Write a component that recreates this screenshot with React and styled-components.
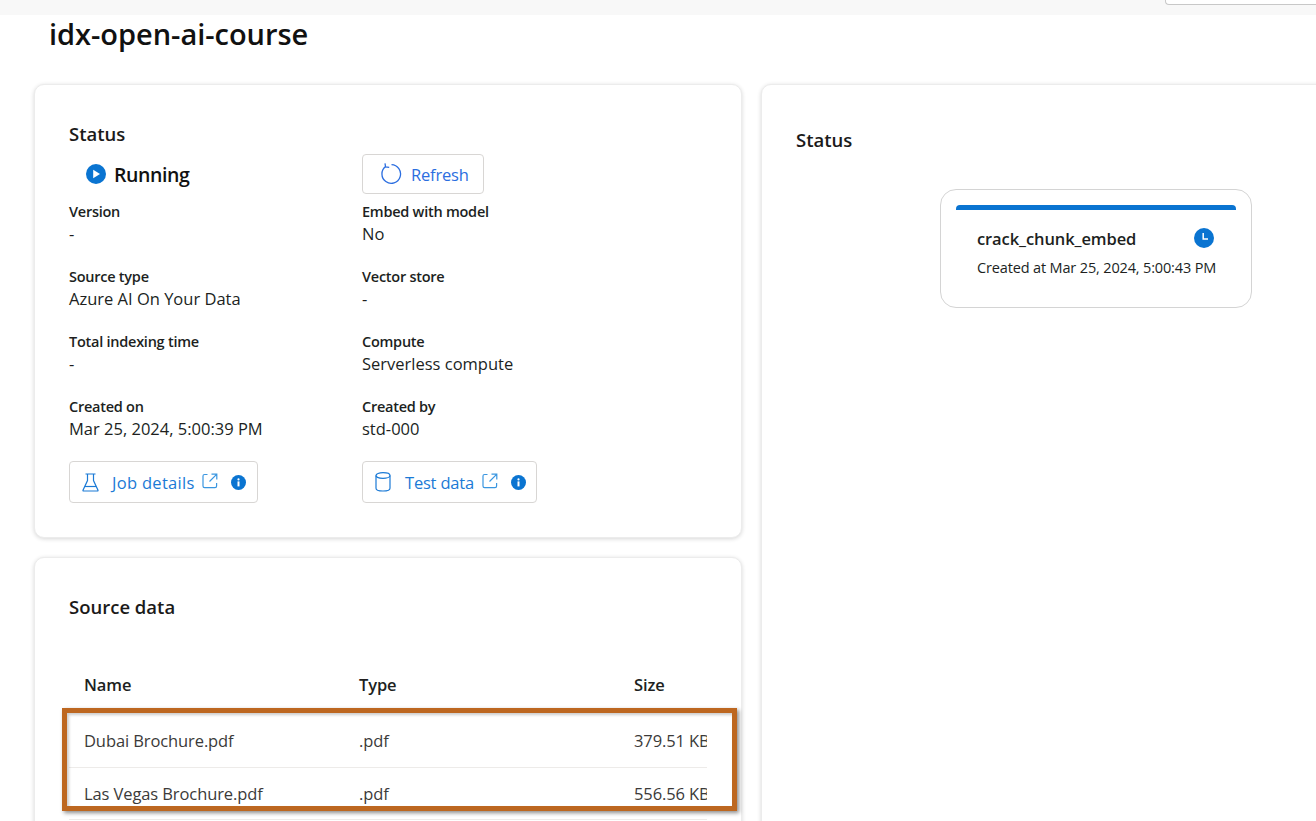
import React from "react";
import styled, { createGlobalStyle } from "styled-components";

const Global = createGlobalStyle`
  html, body { margin: 0; padding: 0; background: #fff; }
  body { font-family: "Open Sans", "Noto Sans", sans-serif; color: #201f1e; }
`;
const Page = styled.div`
  position: relative; width: 1316px; height: 821px; overflow: hidden; background: #fff;
`;
const TopBar = styled.div`
  height: 15px; background: #f8f8f8; display: flex; justify-content: flex-end; align-items: flex-start;
`;
const SearchEdge = styled.div`
  width: 151px; height: 5px; box-sizing: border-box; background: #fff;
  border: 1px solid #c8c8c8; border-top: 0; border-right: 0; border-radius: 0 0 0 4px;
`;
const Title = styled.h1`
  margin: 0; padding: 0 0 0 49px; height: 69px; box-sizing: border-box;
  font-size: 29px; line-height: 38px; font-weight: 600; color: #111; letter-spacing: -0.03px; white-space: nowrap;
`;
const Columns = styled.div`
  display: grid; grid-template-columns: 708px 620px; column-gap: 19px; padding-left: 34px; align-items: start;
`;
const Stack = styled.div`
  display: flex; flex-direction: column; gap: 19px;
`;
const Card = styled.section`
  box-sizing: border-box; background: #fff; border: 1px solid #ececec; border-radius: 10px;
  box-shadow: 0 1px 4px rgba(0,0,0,.16);
  padding: ${p => p.$pad || "37px 34px 34px"};
  min-height: ${p => p.$minH || "auto"};
`;
const Heading = styled.h2`
  margin: 0; font-size: 18.5px; line-height: 24px; font-weight: 600; color: #1b1a19; letter-spacing: 0;
`;
const StatusGrid = styled.div`
  display: grid; grid-template-columns: 293px 1fr; margin-top: 8px;
`;
const StatusLabel = styled.div`
  display: flex; align-items: center; gap: 8px; padding-left: 17px; height: 40px;
  font-size: 19.5px; font-weight: 600; color: #111; letter-spacing: -0.4px;
`;
const Button = styled.button`
  box-sizing: border-box; display: inline-flex; align-items: center; background: #fff;
  width: ${p => p.$w}px; height: ${p => p.$h}px; padding: 0 0 0 ${p => p.$pl}px; gap: ${p => p.$gap}px;
  border: 1px solid #d8d6d4; border-radius: 4px; font: inherit; font-size: 16.5px;
  color: ${p => p.$color || "#1b7ad6"}; letter-spacing: -0.2px; justify-self: start;
`;
const Fields = styled.div`
  display: grid; grid-template-columns: 293px 1fr; row-gap: 20px; margin-top: 8px;
`;
const Field = styled.div`
  display: flex; flex-direction: column; height: 45px;
`;
const FieldLabel = styled.div`
  font-size: 14.5px; line-height: 20px; font-weight: 600; color: #201f1e; letter-spacing: -0.25px;
`;
const FieldValue = styled.div`
  font-size: 16.5px; line-height: 24px; color: #201f1e; letter-spacing: 0;
`;
const Links = styled.div`
  display: grid; grid-template-columns: 293px 1fr; margin-top: 19px;
`;
const LinkText = styled.span`
  margin-right: -6px; letter-spacing: ${p => p.$ls}px;
`;
const InfoWrap = styled.span`
  display: inline-flex; margin-left: ${p => p.$ml}px;
`;
const Table = styled.div`
  margin-top: 41px; width: 638px; overflow: hidden;
`;
const Row = styled.div`
  display: grid; grid-template-columns: 275px 275px 275px; padding-left: 15px; align-items: center; white-space: nowrap;
  height: ${p => p.$head ? 48 : 52.5}px;
  margin-bottom: ${p => p.$head ? 7 : 0}px;
  border-bottom: ${p => p.$head ? "0" : "1px solid #edebe9"};
  box-sizing: border-box;
  font-size: 16.5px;
  font-weight: ${p => p.$head ? 600 : 400};
  color: ${p => p.$head ? "#201f1e" : "#3b3a39"};
  letter-spacing: -0.1px;
`;
const Cell = styled.div``;
const NodeBox = styled.div`
  box-sizing: border-box; width: 312px; height: 119px; margin: 37px 0 0 144px; padding: 15px;
  border: 1px solid #d4d4d4; border-radius: 16px; background: #fff;
`;
const NodeBar = styled.div`
  height: 5px; background: #0a74d1; border-radius: 4px 4px 0 0;
`;
const NodeHead = styled.div`
  display: flex; justify-content: space-between; align-items: center; padding: 16px 22px 0 21px; height: 24px;
`;
const NodeName = styled.div`
  font-size: 16.5px; font-weight: 600; color: #201f1e; letter-spacing: -0.1px; padding-top: 1px;
`;
const NodeMeta = styled.div`
  font-size: 14.5px; line-height: 20px; padding: 8px 0 0 21px; color: #201f1e; letter-spacing: -0.15px; white-space: nowrap;
`;
const Annotation = styled.div`
  position: absolute; left: 62px; top: 708px; width: 675px; height: 103px; box-sizing: border-box;
  border: 5px solid #bd6720; box-shadow: 2px 2px 4px rgba(0,0,0,.45), inset 2px 2px 3px rgba(0,0,0,.2);
  pointer-events: none;
`;
const ExternalSvg = styled.svg`
  margin-top: -3px;
`;

const PlayIcon = () => (
  <svg width="20" height="20" viewBox="0 0 20 20">
    <circle cx="10" cy="10" r="10" fill="#0a74d1" />
    <path d="M7.2 5.8 L14 10 L7.2 14.2 Z" fill="#fff" />
  </svg>
);
const RefreshIcon = () => (
  <svg width="22" height="22" viewBox="0 0 22 22" fill="none" stroke="#2b6ee0" strokeWidth="1.3">
    <path d="M5.6 3.6 A9.3 9.3 0 1 0 11.5 1.7" />
    <path d="M5 0.4 L5.6 4 L9.2 4.4" />
  </svg>
);
const FlaskIcon = () => (
  <svg width="17" height="19" viewBox="0 0 17 19" fill="none" stroke="#1b7ad6" strokeWidth="1.2">
    <path d="M3.5 1 H13.5 M5.5 1 V7.5 L1 17.2 Q0.8 18 1.6 18 H15.4 Q16.2 18 16 17.2 L11.5 7.5 V1" />
    <path d="M3 13.5 H14" />
  </svg>
);
const CylinderIcon = () => (
  <svg width="16" height="20" viewBox="0 0 16 20" fill="none" stroke="#1b7ad6" strokeWidth="1.2">
    <ellipse cx="8" cy="3.5" rx="7" ry="2.8" />
    <path d="M1 3.5 V16.2 C1 17.8 4 19 8 19 C12 19 15 17.8 15 16.2 V3.5" />
  </svg>
);
const ExternalIcon = () => (
  <ExternalSvg width="16" height="16" viewBox="0 0 16 16" fill="none" stroke="#3a96e0" strokeWidth="1.2">
    <path d="M5.5 1.5 H2.6 Q1 1.5 1 3.1 V13 Q1 14.6 2.6 14.6 H13 Q14.6 14.6 14.6 13 V10" />
    <path d="M7.5 8.5 L14.6 1.4 M9.5 1.2 H14.8 V6.5" />
  </ExternalSvg>
);
const InfoIcon = () => (
  <svg width="15" height="15" viewBox="0 0 15 15">
    <circle cx="7.5" cy="7.5" r="7.5" fill="#0a74d1" />
    <circle cx="7.5" cy="4.4" r="1.1" fill="#fff" />
    <path d="M6.5 6.4 H8.5 V11.4 H6.5 Z" fill="#fff" />
  </svg>
);
const ClockIcon = () => (
  <svg width="20" height="20" viewBox="0 0 20 20">
    <circle cx="10" cy="10" r="10" fill="#0a74d1" />
    <path d="M9.2 5 V11 H14" fill="none" stroke="#fff" strokeWidth="1.5" />
  </svg>
);

const fields = [
  ["Version", "-"], ["Embed with model", "No"],
  ["Source type", "Azure AI On Your Data"], ["Vector store", "-"],
  ["Total indexing time", "-"], ["Compute", "Serverless compute"],
  ["Created on", "Mar 25, 2024, 5:00:39 PM"], ["Created by", "std-000"],
];
const rows = [
  ["Dubai Brochure.pdf", ".pdf", "379.51 KB"],
  ["Las Vegas Brochure.pdf", ".pdf", "556.56 KB"],
];

export default function App() {
  return (
    <Page>
      <Global />
      <TopBar><SearchEdge /></TopBar>
      <Title>idx-open-ai-course</Title>
      <Columns>
        <Stack>
          <Card>
            <Heading>Status</Heading>
            <StatusGrid>
              <StatusLabel><PlayIcon />Running</StatusLabel>
              <Button $w={122} $h={40} $pl={17} $gap={9} $color="#2b6ee0"><RefreshIcon />Refresh</Button>
            </StatusGrid>
            <Fields>
              {fields.map(([l, v]) => (
                <Field key={l}><FieldLabel>{l}</FieldLabel><FieldValue>{v}</FieldValue></Field>
              ))}
            </Fields>
            <Links>
              <Button $w={189} $h={42} $pl={12} $gap={13}>
                <FlaskIcon /><LinkText $ls={0.3}>Job details</LinkText><ExternalIcon /><InfoWrap $ml={0}><InfoIcon /></InfoWrap>
              </Button>
              <Button $w={175} $h={42} $pl={12} $gap={14}>
                <CylinderIcon /><LinkText $ls={-0.2}>Test data</LinkText><ExternalIcon /><InfoWrap $ml={-1}><InfoIcon /></InfoWrap>
              </Button>
            </Links>
          </Card>
          <Card $pad="37px 34px 0" $minH="300px">
            <Heading>Source data</Heading>
            <Table>
              <Row $head><Cell>Name</Cell><Cell>Type</Cell><Cell>Size</Cell></Row>
              {rows.map(r => (
                <Row key={r[0]}>{r.map(c => <Cell key={c}>{c}</Cell>)}</Row>
              ))}
            </Table>
          </Card>
        </Stack>
        <Card $pad="43px 34px 0" $minH="800px">
          <Heading>Status</Heading>
          <NodeBox>
            <NodeBar />
            <NodeHead><NodeName>crack_chunk_embed</NodeName><ClockIcon /></NodeHead>
            <NodeMeta>Created at Mar 25, 2024, 5:00:43 PM</NodeMeta>
          </NodeBox>
        </Card>
      </Columns>
      <Annotation />
    </Page>
  );
}
